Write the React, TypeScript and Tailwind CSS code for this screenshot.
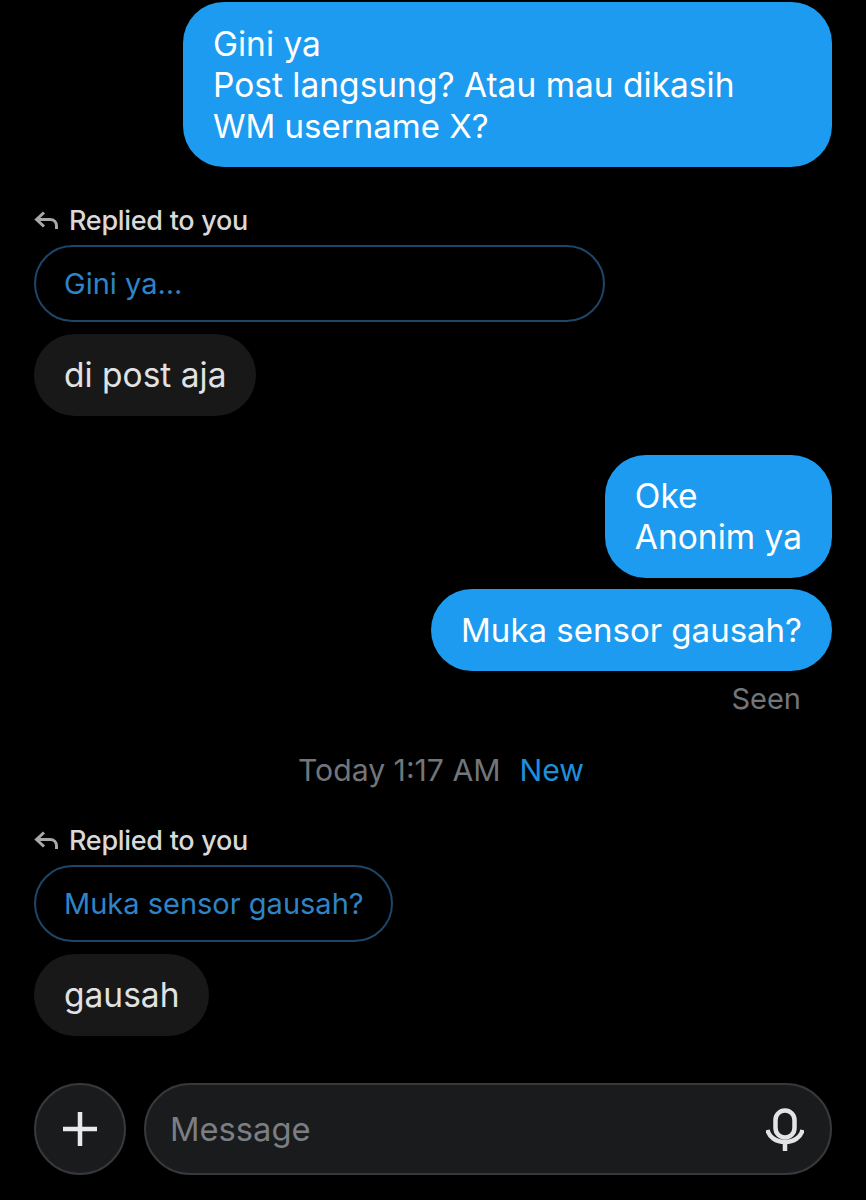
import React from 'react'

const font = { fontFamily: 'Inter, Roboto, sans-serif' }

function RepliedTo({ quote, width }: { quote: string; width: string }) {
  return (
    <div className="flex flex-col items-start">
      {/* Label */}
      <div className="flex items-center h-[32px] text-[27px] font-medium text-[#d9d9d9] tracking-[-0.3px]">
        <svg width="26" height="22" viewBox="0 0 26 22" fill="none" stroke="#a8a8a8" strokeWidth="3" className="mr-[9px] mt-[1px]">
          <path d="M10 2.500 2.500 9.500 10 16.500" />
          <path d="M3 9.500h13c4 0 6.500 2.600 6.500 6.500v3" />
        </svg>
        Replied to you
      </div>
      {/* Quoted message */}
      <div className={`${width} mt-[9px] h-[77px] flex items-center pl-[28px] border-[2.500px] border-[#1d4668] rounded-full text-[29px] text-[#2f84c6]`}>
        {quote}
      </div>
    </div>
  )
}

export default function App() {
  return (
    <div style={font} className="w-[866px] h-[1200px] bg-black flex flex-col pl-[34px] pr-[34px] pt-[2px] text-[33.500px] leading-[41px] overflow-hidden">
      <div className="self-end w-[649px] h-[165px] rounded-[41px] bg-[#1d9bf0] text-white px-[30px] pt-[22px]">
        Gini ya<br />Post langsung? Atau mau dikasih<br /><span className="text-[33px]">WM username X?</span>
      </div>

      <div className="mt-[37px]">
        <RepliedTo quote="Gini ya..." width="w-[571px]" />
      </div>
      <div className="self-start mt-[12px] h-[82px] px-[30px] flex items-center rounded-[41px] bg-[#181818] text-[#e0e2e3]">
        di post aja
      </div>

      <div className="self-end mt-[39px] h-[123px] rounded-[41px] bg-[#1d9bf0] text-white px-[30px] pt-[21px]">
        Oke<br />Anonim ya
      </div>
      <div className="self-end mt-[11px] h-[82px] px-[30px] flex items-center rounded-[41px] bg-[#1d9bf0] text-white text-[33px]">
        Muka sensor gausah?
      </div>
      <div className="self-end mr-[31px] mt-[8px] text-[29px] leading-[40px] text-[#71767b]">Seen</div>

      <div className="mt-[31px] flex justify-center gap-[19px] text-[30.200px] leading-[40px] pl-[16px]">
        <span className="text-[#71767b]">Today 1:17 AM</span>
        <span className="text-[#1d8fdc]">New</span>
      </div>

      <div className="mt-[34px]">
        <RepliedTo quote="Muka sensor gausah?" width="w-[359px]" />
      </div>
      <div className="self-start mt-[12px] h-[82px] px-[30px] flex items-center rounded-[41px] bg-[#181818] text-[#e0e2e3]">
        gausah
      </div>

      {/* Composer */}
      <div className="mt-[47px] flex gap-[18px]">
        <div className="w-[92px] h-[92px] shrink-0 rounded-full bg-[#1a1b1d] border-2 border-[#36383b] flex items-center justify-center">
          <svg width="36" height="36" viewBox="0 0 36 36" stroke="#e7e9ea" strokeWidth="4.500">
            <path d="M18 1v34M1 18h34" />
          </svg>
        </div>
        <div className="flex-1 h-[92px] rounded-full bg-[#1a1b1d] border-2 border-[#36383b] flex items-center justify-between pl-[24px] pr-[26px] text-[#7b7f84] text-[32.700px]">
          Message
          <svg width="38" height="43" viewBox="0 0 38 43" fill="none" stroke="#e2e4e5" strokeWidth="4.500">
            <rect x="9.500" y="2.500" width="19" height="27" rx="9.500" />
            <path d="M1.500 22c1.500 7 8.500 12 17.500 12s16-5 17.500-12" />
            <path d="M19 34v9" />
          </svg>
        </div>
      </div>
    </div>
  )
}
